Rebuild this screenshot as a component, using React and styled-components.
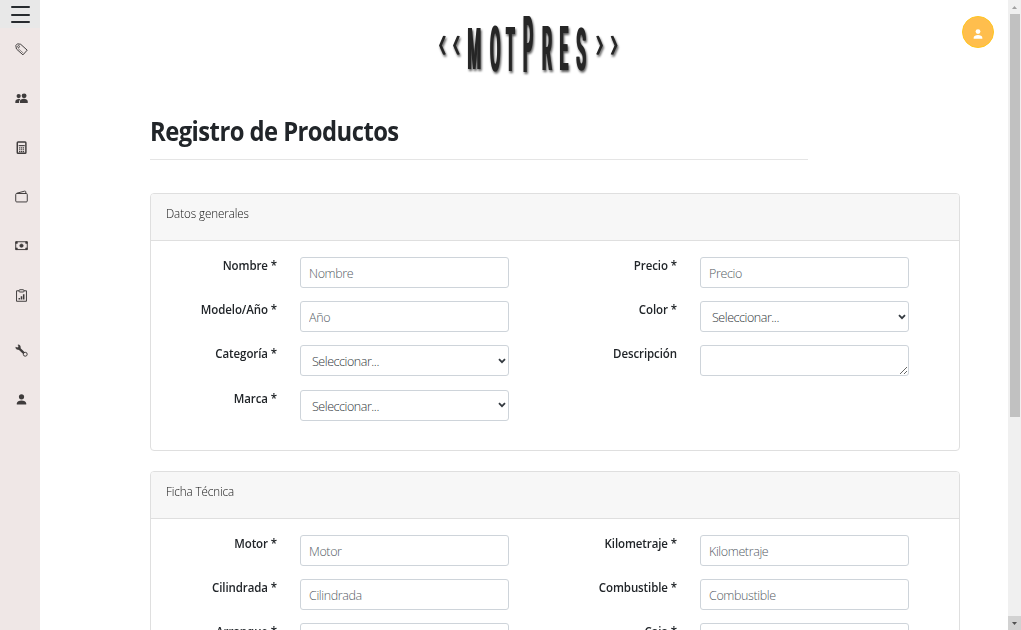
import React from "react";
import styled, { createGlobalStyle } from "styled-components";

const Global = createGlobalStyle`
  * { box-sizing: border-box; }
  html, body { margin: 0; height: 100%; overflow: hidden; background: #fff; }
  body { font-family: "Open Sans", "Noto Sans", sans-serif; font-size: 12.5px; color: #212529; }
`;

const Page = styled.div`display: flex; width: 1021px; height: 630px; overflow: hidden;`;
const Sidebar = styled.nav`
  flex: 0 0 40px; background: #efe7e6; display: flex; flex-direction: column; align-items: center; color: #3f3c3c;
`;
const MenuButton = styled.button`
  width: 40px; height: 28px; border: 0; padding: 6px 10px 5px 11px; background: #e8e8e8;
  display: flex; flex-direction: column; justify-content: space-between; flex: none;
`;
const MenuLine = styled.span`height: 2px; width: 19px; border-radius: 1px; background: #272b2f;`;
const NavItem = styled.a`
  display: flex; align-items: center; justify-content: center; width: 40px; height: 13px; flex: none;
  margin-top: ${(p) => p.$gap}px; padding: 1px 0 0 2px;
`;
const Main = styled.main`flex: 1; min-width: 0; padding: 0 48px 0 110px; overflow: hidden;`;
const TopBar = styled.header`
  height: 80px; display: flex; justify-content: flex-end; padding: 16px 0 0; margin-right: -34px;
`;
const Logo = styled.div`
  flex: 1; height: 64px; padding-left: 288px; display: flex; margin-top: -16px;
`;
const LogoSvg = styled.svg`
  flex: none; overflow: visible; font-family: Roboto, sans-serif; font-weight: 700; font-size: 100px; fill: #262626;
  filter: drop-shadow(1px 0 0 #262626) drop-shadow(1.5px 2px 1px rgba(0, 0, 0, 0.65));
`;
const Avatar = styled.div`
  width: 32px; height: 32px; border-radius: 50%; background: #ffbe4d; border: 1px solid #ffc61f; color: #fff;
  display: flex; align-items: center; justify-content: center; padding-top: 3px;
`;
const Title = styled.h1`
  margin: 32px 0 0; height: 47px; line-height: 38px; font-size: 26.5px; font-weight: 700;
  letter-spacing: -0.6px; white-space: nowrap; transform: scaleX(0.898); transform-origin: left;
`;
const Rule = styled.hr`margin: 0 0 33px; width: 658px; height: 1px; border: 0; background: #e5e5e5;`;
const Card = styled.section`
  width: 810px; height: ${(p) => p.$height}px; border: 1px solid #dfdfdf; border-radius: 4px; margin-bottom: 20px; overflow: hidden;
`;
const CardHeader = styled.div`
  height: 47px; padding: 11px 15px; background: #f7f7f7; border-bottom: 1px solid #dfdfdf;
`;
const CardTitle = styled.div`
  line-height: 18px; font-weight: 300; font-size: 12.5px; letter-spacing: -0.1px; color: #111;
  transform: scaleX(0.93); transform-origin: left;
`;
const Columns = styled.div`display: flex; padding-top: 16px;`;
const Column = styled.div`
  width: 400px; display: flex; flex-direction: column; gap: 13.2px; flex: none;
`;
const Row = styled.div`display: flex; height: 31px;`;
const Label = styled.label`
  width: 126px; margin-right: 23px; text-align: right; line-height: 18px; font-weight: 600; font-size: 12.5px;
  letter-spacing: -0.1px; white-space: nowrap; transform: scaleX(0.92); transform-origin: right;
`;
const control = `
  width: 209px; height: 31px; border: 1px solid #ced4da; border-radius: 3px; background: #fff;
  font-family: inherit; font-weight: 300; font-size: 12.5px; color: #30363b; outline: 0; margin: 0;
`;
const Input = styled.input`
  ${control}
  padding: 2px 8px 0; letter-spacing: -0.38px;
  &::placeholder { color: #555d65; opacity: 1; }
`;
const SelectBox = styled.div`
  display: grid; align-items: center; color: #343a40;
  > * { grid-area: 1 / 1; }
  > svg { justify-self: end; margin: 0 3.5px 0 0; pointer-events: none; }
`;
const Select = styled.select`${control} appearance: none; padding: 2px 0 0 11px; letter-spacing: -0.45px;`;
const TextArea = styled.textarea`${control} padding: 4px 8px; resize: vertical; display: block;`;

const ScrollTrack = styled.div`
  flex: 0 0 13px; background: #f0f0f0; display: flex; flex-direction: column; align-items: center;
`;
const ScrollThumb = styled.div`width: 10px; height: 403px; background: #c1c1c1; margin-left: 1px;`;
const ScrollArrow = styled.div`
  width: 13px; height: 14px; display: flex; align-items: center; justify-content: center;
  background: ${(p) => (p.$down ? "#d2d2d2" : "#f0f0f0")}; margin-top: ${(p) => (p.$down ? "auto" : 0)};
  color: ${(p) => (p.$down ? "#505050" : "#a0a0a0")};
`;

const Icon = ({ children, size = 13 }) => (
  <svg width={size} height={size} viewBox="0 0 16 16" fill="none" stroke="currentColor" strokeWidth="1.2" strokeLinejoin="round">
    {children}
  </svg>
);
const personShape = (
  <g fill="currentColor" stroke="none">
    <circle cx="8" cy="4.7" r="3.2" />
    <path d="M2.2 14.2v-1.3c0-2.4 2.9-3.7 5.8-3.7s5.8 1.3 5.8 3.7v1.3z" />
  </g>
);
const navIcons = [
  [14, <g><path d="M1 3.2 3 1l4 .6 8 7.2-5.2 5.8L1.8 7.4z" /><circle cx="4.4" cy="4.4" r="1.2" strokeWidth="1" /><path d="m3.6 6.6 6.6 5.8" strokeWidth=".7" /></g>],
  [36, <g fill="currentColor" stroke="none"><circle cx="4.5" cy="5" r="2.6" /><circle cx="11.2" cy="4.7" r="3" /><path d="M.4 13.5v-1.6c0-2 1.8-3.2 4.2-3.2.8 0 1.5.1 2 .4-1.3 1-1.7 2-1.7 4.4zM6 13.5v-1.7c0-2.3 2.4-3.4 4.9-3.4s4.8 1.1 4.8 3.4v1.7z" /></g>],
  [36, <g><rect x="2.8" y="1.2" width="10.6" height="13.8" rx="1" strokeWidth="1.8" /><path d="M4.5 5.7h7.5" strokeWidth="1.4" /><path d="M5 8.4h6.4M5 10.8h6.4M5 13h6.4" strokeDasharray="1.6 .7" strokeWidth="1.4" /></g>],
  [36, <g><rect x=".9" y="4.3" width="14.2" height="10.4" rx="1.2" /><path d="M2 4 11.8 1.4c.8-.2 1.4.2 1.5.8v2" /></g>],
  [36, <g><rect x=".9" y="3.4" width="14.2" height="9.6" /><circle cx="8" cy="8.2" r="2.1" fill="currentColor" strokeWidth=".8" /><path d="M.9 3.4h2v2h-2zm12.2 0h2v2h-2zm-12.2 7.6h2v2h-2zm12.2 0h2v2h-2z" fill="currentColor" strokeWidth=".7" /></g>],
  [37, <g><path d="M5 2.2H1.9v12.9h12.2V2.2H11" /><rect x="5" y=".9" width="6" height="2.8" rx="1" /><path d="M5.3 13v-2M8 13V9m2.7 4V6.5" strokeWidth="1.9" /></g>],
  [42, <g><path d="M4.6 5 11.4 11.6" strokeWidth="2.8" /><path d="M3.8 1a2.9 2.9 0 1 1-2.9 3l2.2.7 1.4-1.4z" fill="currentColor" strokeWidth=".7" /><circle cx="12.6" cy="12.6" r="2.4" fill="#efe7e6" strokeWidth="1.2" /></g>],
  [36, personShape],
];

const logoLetters = [
  ["M", 467.6, 68.5, 0.155, 0.58], ["O", 490, 70.8, 0.152, 0.63], ["T", 506, 70.5, 0.142, 0.62],
  ["P", 523, 71.5, 0.158, 0.785], ["R", 542, 70, 0.158, 0.61], ["E", 559.7, 70, 0.155, 0.61], ["S", 576.3, 70, 0.16, 0.6],
];
const chevrons = [[439, 1], [453, 1], [602, -1], [616.5, -1]];

const Field = ({ label, type = "input", placeholder }) => (
  <Row>
    <Label>{label}</Label>
    {type === "input" && <Input placeholder={placeholder} />}
    {type === "select" && (
      <SelectBox>
        <Select><option>Seleccionar...</option></Select>
        <svg width="8" height="6" fill="none" stroke="currentColor" strokeWidth="1.8"><path d="M1 1.2 4 4.2 7 1.2" /></svg>
      </SelectBox>
    )}
    {type === "textarea" && <TextArea />}
  </Row>
);
const sections = [
  {
    title: "Datos generales", height: 258,
    columns: [
      [
        { label: "Nombre *", placeholder: "Nombre" }, { label: "Modelo/Año *", placeholder: "Año" },
        { label: "Categoría *", type: "select" }, { label: "Marca *", type: "select" },
      ],
      [
        { label: "Precio *", placeholder: "Precio" }, { label: "Color *", type: "select" },
        { label: "Descripción", type: "textarea" },
      ],
    ],
  },
  {
    title: "Ficha Técnica", height: 258,
    columns: [
      [
        { label: "Motor *", placeholder: "Motor" }, { label: "Cilindrada *", placeholder: "Cilindrada" },
        { label: "Arranque *", placeholder: "" },
      ],
      [
        { label: "Kilometraje *", placeholder: "Kilometraje" }, { label: "Combustible *", placeholder: "Combustible" },
        { label: "Caja *", placeholder: "" },
      ],
    ],
  },
];

export default function App() {
  return (
    <Page>
      <Global />
      <Sidebar>
        <MenuButton><MenuLine /><MenuLine /><MenuLine /></MenuButton>
        {navIcons.map(([gap, shape], i) => (
          <NavItem key={i} $gap={gap}><Icon>{shape}</Icon></NavItem>
        ))}
      </Sidebar>
      <Main>
        <TopBar>
          <Logo>
            <LogoSvg width="180" height="80" viewBox="438 0 180 80">
              {logoLetters.map(([ch, x, y, sx, sy]) => (
                <text key={ch} transform={`translate(${x - 0.6} ${y}) scale(${sx} ${sy})`}>{ch}</text>
              ))}
              {chevrons.map(([x, d]) => (
                <path key={x} transform={`translate(${x} 0) scale(${d} 1)`} d="M5 36 1 45.5 5 54.5" fill="none" stroke="#262626" strokeWidth="1.8" />
              ))}
            </LogoSvg>
          </Logo>
          <Avatar><Icon size={12}>{personShape}</Icon></Avatar>
        </TopBar>
        <Title>Registro de Productos</Title>
        <Rule />
        {sections.map((s) => (
          <Card key={s.title} $height={s.height}>
            <CardHeader><CardTitle>{s.title}</CardTitle></CardHeader>
            <Columns>
              {s.columns.map((fields, i) => (
                <Column key={i}>
                  {fields.map((f) => <Field key={f.label} {...f} />)}
                </Column>
              ))}
            </Columns>
          </Card>
        ))}
      </Main>
      <ScrollTrack>
        <ScrollArrow><svg width="5" height="3"><path d="M0 3 2.5 0 5 3z" fill="currentColor" /></svg></ScrollArrow>
        <ScrollThumb />
        <ScrollArrow $down><svg width="5" height="3"><path d="M0 0h5L2.5 3z" fill="currentColor" /></svg></ScrollArrow>
      </ScrollTrack>
    </Page>
  );
}
